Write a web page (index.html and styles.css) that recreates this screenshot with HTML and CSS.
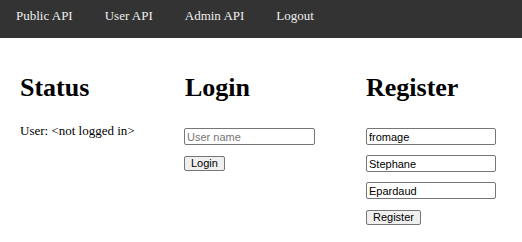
FILE: index.html
```html
<!DOCTYPE html>
<html lang="en">
<head>
  <meta charset="UTF-8">
  <title>API Demo</title>
  <link rel="stylesheet" href="styles.css">
</head>
<body>
  <nav class="topnav">
    <a href="#">Public API</a>
    <a href="#">User API</a>
    <a href="#">Admin API</a>
    <a href="#">Logout</a>
  </nav>

  <div class="panels">
    <div class="panel panel-status">
      <h1>Status</h1>
      <p>User: &lt;not logged in&gt;</p>
    </div>

    <div class="panel panel-login">
      <h1>Login</h1>
      <form class="stack">
        <input type="text" placeholder="User name">
        <div><button type="button">Login</button></div>
      </form>
    </div>

    <div class="panel panel-register">
      <h1>Register</h1>
      <form class="stack">
        <input type="text" value="fromage">
        <input type="text" value="Stephane">
        <input type="text" value="Epardaud">
        <div><button type="button">Register</button></div>
      </form>
    </div>
  </div>
</body>
</html>
```

FILE: styles.css
```css
* {
  box-sizing: border-box;
}

body {
  margin: 0;
  font-family: "Liberation Serif", "Times New Roman", serif;
  font-size: 13px;
  color: #000;
  background: #fff;
}

.topnav {
  display: flex;
  background-color: #333;
  height: 38px;
  padding-top: 8px;
}

.topnav a {
  color: #eee;
  text-decoration: none;
  padding: 0 16px;
  line-height: 15px;
}

.panels {
  display: grid;
  grid-template-columns: 164px 182px 1fr;
  padding: 36px 20px 0;
}

h1 {
  font-size: 26px;
  font-weight: bold;
  line-height: 28px;
  margin: 0 0 21px;
}

.panel-login h1 {
  margin-left: 1px;
}

p {
  margin: 0;
  line-height: 15px;
}

.stack {
  display: flex;
  flex-direction: column;
  gap: 10px;
  margin: 0;
  padding-top: 5px;
}

input {
  width: 131px;
  height: 17px;
  font-family: "Liberation Sans", Arial, sans-serif;
  font-size: 11px;
  color: #000;
  padding: 0 2px;
  border: 1px solid #767676;
  border-radius: 2px;
  margin: 0;
}

.panel-register input {
  width: 130px;
}

input::placeholder {
  color: #757575;
}

button {
  font-family: "Liberation Sans", Arial, sans-serif;
  font-size: 11px;
  color: #000;
  height: 15px;
  padding: 0 6px;
  line-height: 12px;
  background-color: #efefef;
  border: 1px solid #767676;
  border-radius: 2px;
}
```
